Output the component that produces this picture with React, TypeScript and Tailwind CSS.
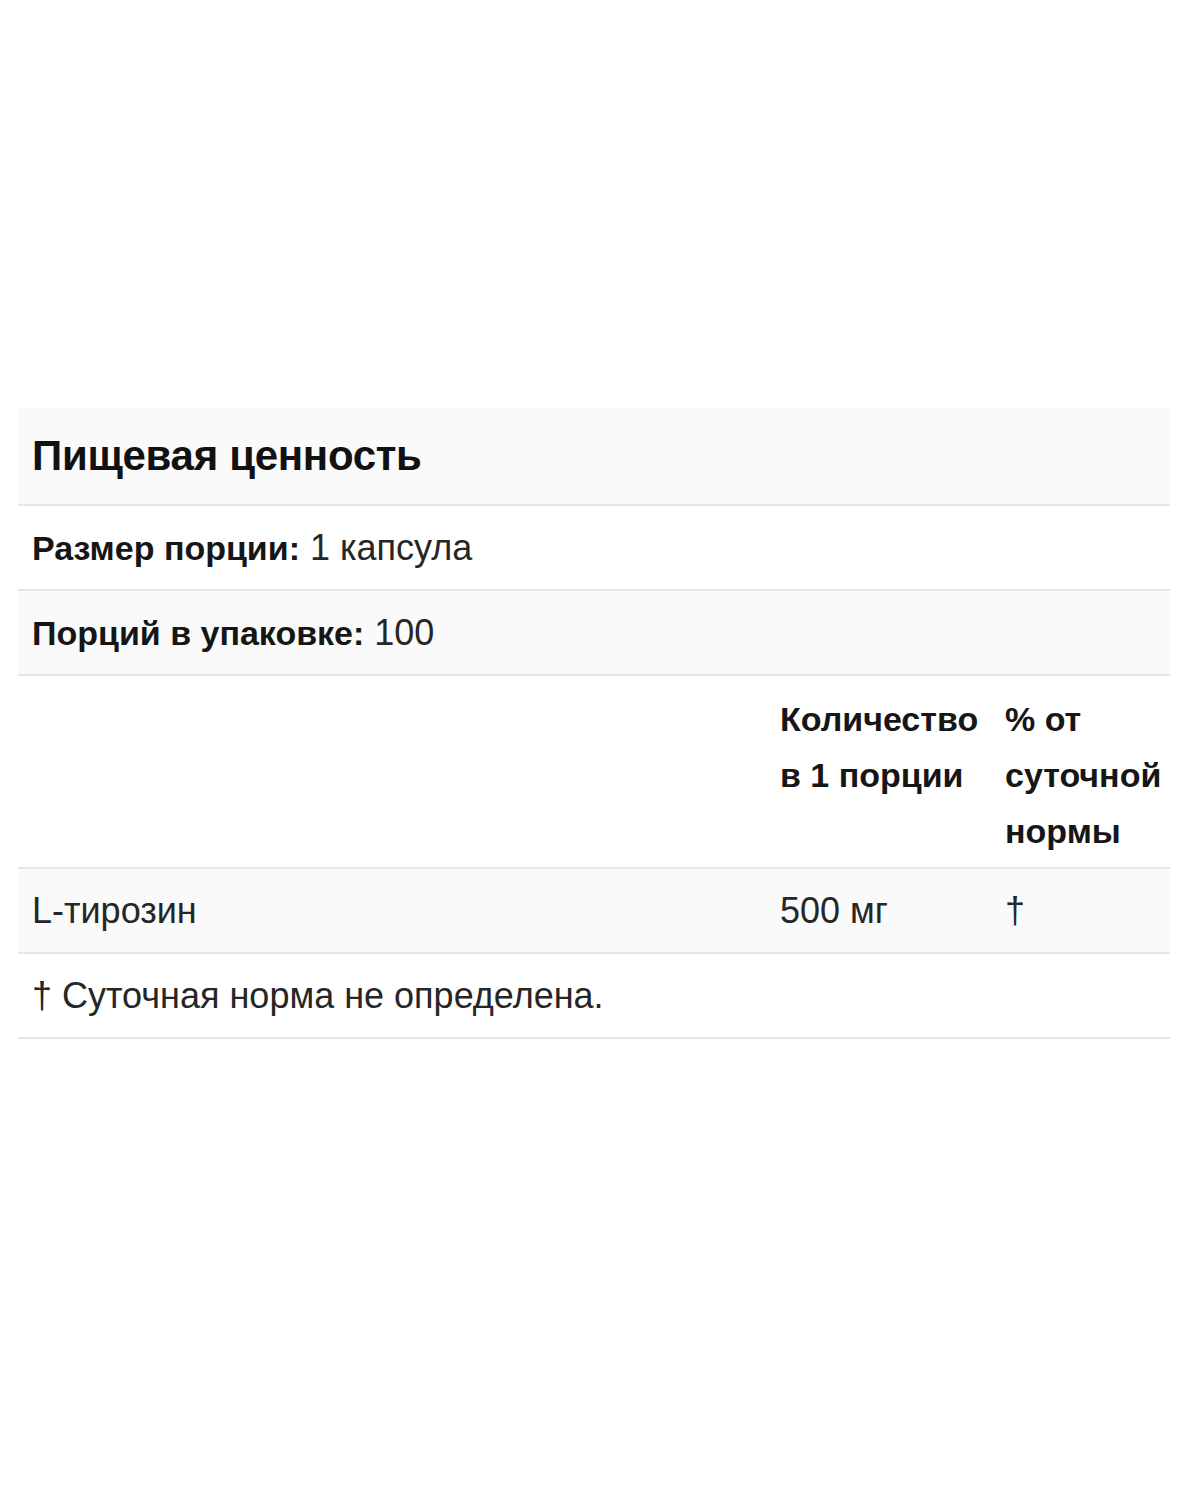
const rowBorder = "border-b-2 border-[#e6e6e6]";

export default function App() {
  return (
    <div className="min-h-[1500px] bg-white pt-[408px] font-['Liberation_Sans',Arial,sans-serif] text-[#262626]">
      <table className="ml-[18px] w-[1152px] table-fixed border-collapse text-[36px]">
        <colgroup>
          <col className="w-[748px]" />
          <col className="w-[225px]" />
          <col />
        </colgroup>
        <thead>
          <tr className={`${rowBorder} bg-[#fafafa]`}>
            <th colSpan={3} className="px-[14px] py-[20px] text-left text-[42px] font-bold leading-[56px] tracking-[-0.3px] text-[#111]">
              Пищевая ценность
            </th>
          </tr>
        </thead>
        <tbody>
          <tr className={`${rowBorder} bg-white`}>
            <td colSpan={3} className="h-[85px] px-[14px] py-0 leading-[54px]">
              <span className="text-[34px] font-bold text-[#161616]">Размер порции:</span> 1 капсула
            </td>
          </tr>
          <tr className={`${rowBorder} bg-[#fafafa]`}>
            <td colSpan={3} className="h-[85px] px-[14px] py-0 leading-[54px]">
              <span className="text-[34px] font-bold text-[#161616]">Порций в упаковке:</span> 100
            </td>
          </tr>
          <tr className={`${rowBorder} bg-white`}>
            <td className="px-[14px]" />
            <td className="px-[14px] pb-[8px] pt-[15px] align-top text-[34px] font-bold leading-[56px] text-[#161616]">
              Количество в 1 порции
            </td>
            <td className="px-[14px] pb-[8px] pt-[15px] align-top text-[34px] font-bold leading-[56px] text-[#161616]">
              % от суточной нормы
            </td>
          </tr>
          <tr className={`${rowBorder} bg-[#fafafa]`}>
            <td className="h-[85px] px-[14px] py-0 leading-[54px]">L-тирозин</td>
            <td className="h-[85px] px-[14px] py-0 leading-[54px]">500 мг</td>
            <td className="h-[85px] px-[14px] py-0 leading-[54px]">†</td>
          </tr>
          <tr className={`${rowBorder} bg-white`}>
            <td colSpan={3} className="h-[85px] px-[14px] py-0 leading-[54px]">
              † Суточная норма не определена.
            </td>
          </tr>
        </tbody>
      </table>
    </div>
  );
}
